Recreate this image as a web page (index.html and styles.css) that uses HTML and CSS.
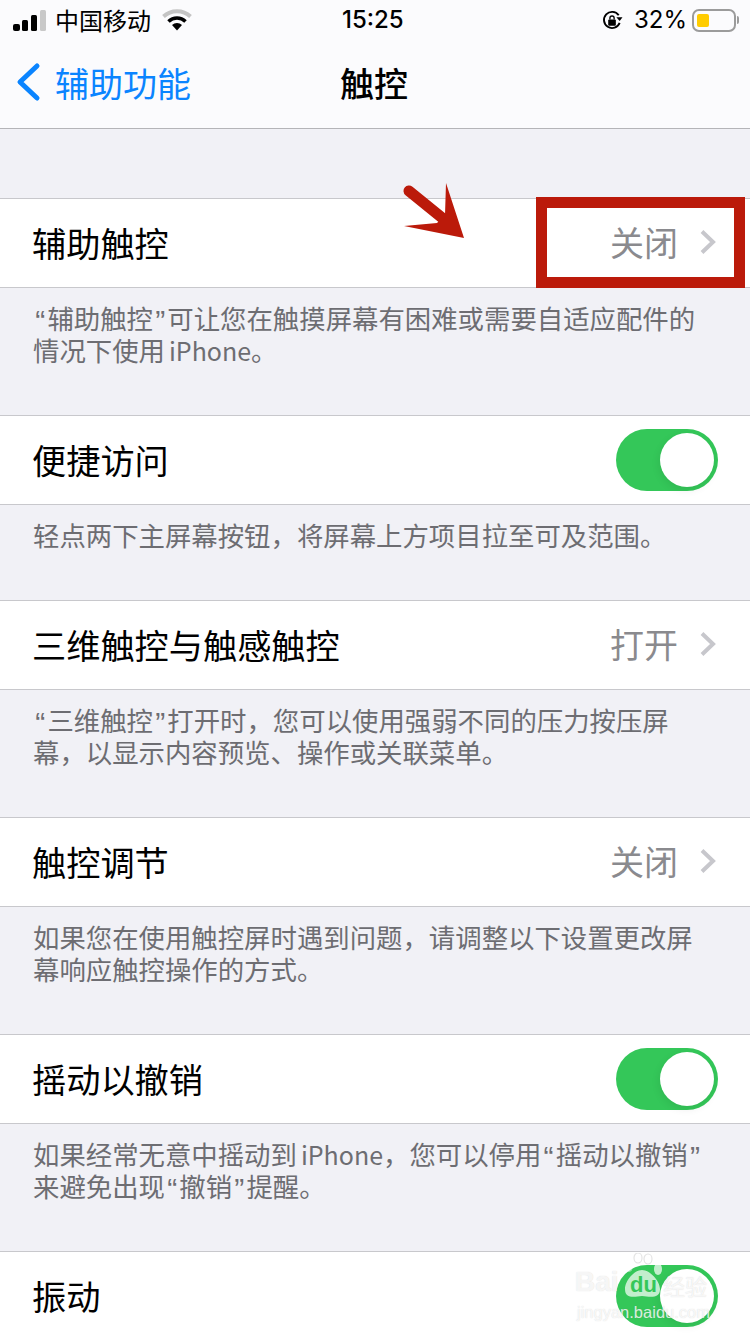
FILE: index.html
```html
<!DOCTYPE html>
<html lang="zh-CN">
<head>
    <meta charset="UTF-8">
    <meta name="viewport" content="width=device-width, initial-scale=1.0">
    <title>触控</title>
    <link rel="stylesheet" href="styles.css">
</head>
<body>
    <div class="screen">
        <header class="topbar">
            <div class="status">
                <div class="status-left">
                    <svg class="signal" width="33" height="21" viewBox="0 0 33 21">
                        <rect x="0" y="14" width="7" height="7" rx="2" fill="#000"/>
                        <rect x="9" y="10" width="6" height="11" rx="1.500" fill="#000"/>
                        <rect x="18" y="5" width="6" height="16" rx="1.500" fill="#000"/>
                        <rect x="27" y="0" width="6" height="21" rx="1.500" fill="#c8c8c8"/>
                    </svg>
                    <span class="carrier">中国移动</span>
                    <svg class="wifi" width="30" height="22" viewBox="0 0 30 22">
                        <path d="M1.500 7.500 A20 20 0 0 1 28.500 7.500" fill="none" stroke="#c4c4c4" stroke-width="4"/>
                        <path d="M6.500 12.500 A12 12 0 0 1 23.500 12.500" fill="none" stroke="#000" stroke-width="3.500"/>
                        <path d="M10 16 A7.500 7.500 0 0 1 20 16 L15 21.500 Z" fill="#000"/>
                    </svg>
                </div>
                <span class="clock">15:25</span>
                <div class="status-right">
                    <svg class="lock" width="21" height="21" viewBox="0 0 22 22">
                        <path d="M18.500 13.500 A8.500 8.500 0 1 1 17.500 5.500" fill="none" stroke="#000" stroke-width="2"/>
                        <path d="M15 7.500 L21.500 7.500 L18.500 11.500 Z" fill="#000"/>
                        <rect x="6.500" y="10" width="8" height="6.500" rx="1" fill="#000"/>
                        <path d="M8.300 10 V8.500 A2.200 2.200 0 0 1 12.700 8.500 V10" fill="none" stroke="#000" stroke-width="1.400"/>
                    </svg>
                    <span class="percent">32%</span>
                    <div class="battery"><div class="battery-level"></div></div>
                    <div class="battery-tip"></div>
                </div>
            </div>
            <nav class="navbar">
                <div class="back">
                    <svg width="26" height="40" viewBox="0 0 26 40">
                        <path d="M22 4 L5 20 L22 36" fill="none" stroke="#0a84ff" stroke-width="5" stroke-linecap="round" stroke-linejoin="round"/>
                    </svg>
                    <span>辅助功能</span>
                </div>
                <h1 class="title">触控</h1>
            </nav>
        </header>

        <section class="group first">
            <div class="row">
                <span class="label">辅助触控</span>
                <span class="value">关闭</span>
                <svg class="chevron" width="18" height="26" viewBox="0 0 18 26"><path d="M3 2.500 L14 13 L3 23.500" fill="none" stroke="#c7c7cc" stroke-width="4"/></svg>
            </div>
            <p class="note"><span class="q">“</span>辅助触控<span class="q">”</span>可让您在触摸屏幕有困难或需要自适应配件的情况下使用<span class="latin">iPhone</span>。</p>
        </section>

        <section class="group short">
            <div class="row">
                <span class="label">便捷访问</span>
                <div class="switch"><div class="knob"></div></div>
            </div>
            <p class="note">轻点两下主屏幕按钮，将屏幕上方项目拉至可及范围。</p>
        </section>

        <section class="group">
            <div class="row">
                <span class="label">三维触控与触感触控</span>
                <span class="value">打开</span>
                <svg class="chevron" width="18" height="26" viewBox="0 0 18 26"><path d="M3 2.500 L14 13 L3 23.500" fill="none" stroke="#c7c7cc" stroke-width="4"/></svg>
            </div>
            <p class="note"><span class="q">“</span>三维触控<span class="q">”</span>打开时，您可以使用强弱不同的压力按压屏幕，以显示内容预览、操作或关联菜单。</p>
        </section>

        <section class="group">
            <div class="row">
                <span class="label">触控调节</span>
                <span class="value">关闭</span>
                <svg class="chevron" width="18" height="26" viewBox="0 0 18 26"><path d="M3 2.500 L14 13 L3 23.500" fill="none" stroke="#c7c7cc" stroke-width="4"/></svg>
            </div>
            <p class="note">如果您在使用触控屏时遇到问题，请调整以下设置更改屏幕响应触控操作的方式。</p>
        </section>

        <section class="group">
            <div class="row">
                <span class="label">摇动以撤销</span>
                <div class="switch"><div class="knob"></div></div>
            </div>
            <p class="note">如果经常无意中摇动到<span class="latin">iPhone</span>，您可以停用<span class="q">“</span>摇动以撤销<span class="q">”</span>来避免出现<span class="q">“</span>撤销<span class="q">”</span>提醒。</p>
        </section>

        <section class="group">
            <div class="row">
                <span class="label">振动</span>
                <div class="switch"><div class="knob"></div></div>
            </div>
        </section>

        <!-- annotation on top of the screenshot -->
        <div class="redbox"></div>
        <svg class="arrow" width="70" height="66" viewBox="0 0 70 66">
            <path d="M6 8 L43 38" stroke="#bb1a0a" stroke-width="11" stroke-linecap="round" fill="none"/>
            <path d="M43 0 L61 55 L1 43 L34 40 L42 32 Z" fill="#bb1a0a"/>
        </svg>

        <div class="watermark">
            <svg class="paw" width="40" height="46" viewBox="0 0 40 46">
                <ellipse cx="6" cy="13" rx="4" ry="6" fill="#fff" fill-opacity="0.45"/>
                <ellipse cx="15" cy="5" rx="4" ry="5" fill="none" stroke="#e4e4e4" stroke-width="1.200"/>
                <ellipse cx="25" cy="6" rx="4" ry="5" fill="none" stroke="#e4e4e4" stroke-width="1.200"/>
                <ellipse cx="35" cy="16" rx="4" ry="6" fill="#fff" fill-opacity="0.7"/>
                <path d="M19 17 C27 17 37 28 37 36 C37 46 27 44 19 43 C11 44 2 46 2 36 C2 28 11 17 19 17 Z" fill="#fff" fill-opacity="0.7"/>
            </svg>
            <span class="wm-bai">Bai</span>
            <span class="wm-du">du</span>
            <span class="wm-jy">经验</span>
            <span class="wm-url">jingyan.baidu.com</span>
        </div>
    </div>
</body>
</html>
```

FILE: styles.css
```css
* {
    box-sizing: border-box;
}
html, body {
    margin: 0;
    padding: 0;
}
body {
    font-family: "Noto Sans CJK SC", "Noto Sans", sans-serif;
    color: #000;
    background-color: #f2f2f7;
}
.screen {
    position: relative;
    width: 750px;
    height: 1334px;
    overflow: hidden;
    background-color: #f1f1f6;
}

/* status bar + nav */
.topbar {
    height: 129px;
    background-color: #fbfbfd;
    border-bottom: 1px solid #b4b4b8;
}
.status {
    position: relative;
    display: flex;
    justify-content: space-between;
    align-items: center;
    height: 40px;
    padding: 0 11px 0 13px;
}
.status-left, .status-right {
    display: flex;
    align-items: center;
}
.carrier {
    margin-left: 9px;
    font-size: 24px;
    line-height: 40px;
}
.wifi {
    margin-left: 11px;
}
.clock {
    position: absolute;
    left: 342px;
    font-family: "Inter", "Liberation Sans", sans-serif;
    font-size: 24px;
    font-weight: 500;
    line-height: 40px;
}
.percent {
    margin-left: 11px;
    font-family: "Inter", "Liberation Sans", sans-serif;
    font-size: 24px;
    line-height: 40px;
}
.battery {
    width: 44px;
    height: 23px;
    margin-left: 5px;
    padding: 3px;
    border: 2px solid #9b9b9b;
    border-radius: 7px;
}
.battery-level {
    width: 12px;
    height: 13px;
    background-color: #ffcc00;
    border-radius: 2px;
}
.battery-tip {
    width: 2px;
    height: 8px;
    margin-left: 1px;
    background-color: #9b9b9b;
    border-radius: 0 2px 2px 0;
}
.navbar {
    position: relative;
    display: flex;
    justify-content: center;
    align-items: center;
    height: 84px;
}
.back {
    position: absolute;
    left: 15px;
    top: 0;
    display: flex;
    align-items: center;
    height: 84px;
    font-size: 34px;
    color: #0a84ff;
}
.back span {
    margin-left: 14px;
}
.title {
    margin: 0 2px 0 0;
    font-size: 34px;
    font-weight: 500;
}

/* settings groups */
.group.first {
    margin-top: 69px;
}
.row {
    display: flex;
    align-items: center;
    height: 90px;
    padding: 0 32px 3px 32px;
    background-color: #fff;
    border-top: 1px solid #c8c8cc;
    border-bottom: 1px solid #c8c8cc;
}
.label {
    flex: 1;
    font-size: 34.2px;
}
.value {
    font-size: 34px;
    color: #8a8a8e;
}
.chevron {
    margin-left: 21px;
    margin-right: 1px;
}
.note {
    margin: 0;
    padding: 14px 33px 0 33px;
    height: 127px;
    font-size: 26.4px;
    line-height: 32px;
    color: #6d6d72;
}
.group.short .note {
    height: 95px;
}
.q {
    padding: 0 2.200px;
    font-family: "Liberation Sans", sans-serif;
    font-size: 30px;
    line-height: 0;
    vertical-align: -2px;
}
.latin {
    margin-left: 4px;
    font-size: 25px;
}
.switch {
    display: flex;
    justify-content: flex-end;
    width: 102px;
    height: 62px;
    margin-top: 3px;
    padding: 4px;
    background-color: #34c759;
    border-radius: 31px;
}
.knob {
    width: 54px;
    height: 54px;
    background-color: #fff;
    border-radius: 50%;
    box-shadow: -1px 3px 8px rgba(0, 0, 0, 0.08);
}

/* red annotation */
.redbox {
    position: absolute;
    left: 536px;
    top: 197px;
    width: 209px;
    height: 91px;
    border: 11px solid #bb1a0a;
}
.arrow {
    position: absolute;
    left: 403px;
    top: 183px;
}

/* baidu watermark */
.watermark {
    position: absolute;
    left: 575px;
    top: 1252px;
    width: 150px;
    height: 70px;
    color: rgba(255, 255, 255, 0.8);
    text-shadow: 0 0 1px rgba(120, 120, 120, 0.3);
}
.paw {
    position: absolute;
    left: 48px;
    top: 1px;
}
.wm-bai {
    position: absolute;
    left: 0;
    top: 15px;
    font-family: "Liberation Sans", sans-serif;
    font-size: 28px;
    font-weight: 700;
    line-height: 30px;
}
.wm-du {
    position: absolute;
    left: 55px;
    top: 21px;
    font-family: "Liberation Sans", sans-serif;
    font-size: 22px;
    font-weight: 700;
    line-height: 24px;
    color: #34c759;
    text-shadow: none;
}
.wm-jy {
    position: absolute;
    left: 88px;
    top: 19px;
    font-size: 22px;
    line-height: 28px;
}
.wm-url {
    position: absolute;
    left: 2px;
    top: 50px;
    font-family: "Liberation Sans", sans-serif;
    font-size: 16.500px;
    line-height: 20px;
}
```
